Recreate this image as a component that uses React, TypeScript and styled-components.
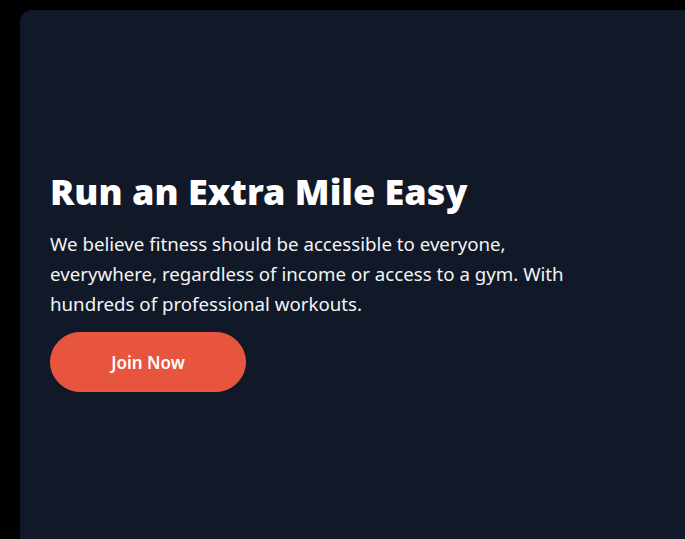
import React from 'react'
import styled, { createGlobalStyle } from 'styled-components'

const GlobalStyle = createGlobalStyle`
  html, body {
    margin: 0;
    padding: 0;
    background: #000;
    overflow: hidden;
  }
  * {
    box-sizing: border-box;
  }
`

const Page = styled.div`
  padding: 10px 0 0 20px;
  width: 100vw;
  height: 100vh;
  overflow: hidden;
`

const Hero = styled.section`
  width: 720px;
  height: 542px;
  background: #111827;
  border-radius: 12px;
  display: flex;
  flex-direction: column;
  justify-content: center;
  padding: 0 30px;
  font-family: 'Noto Sans', 'Open Sans', sans-serif;
`

const Title = styled.h1`
  margin: 0 0 15px;
  color: #fff;
  font-size: 36px;
  line-height: 44px;
  font-weight: 900;
`

const Lead = styled.p`
  margin: 0 0 13px;
  max-width: 540px;
  color: #f3f4f6;
  font-size: 18.7px;
  line-height: 30px;
`

const JoinButton = styled.button`
  width: 196px;
  height: 60px;
  border-radius: 30px;
  border: 1px solid #f0564a;
  background: #e8553f;
  color: #fff;
  font-family: inherit;
  font-size: 17px;
  font-weight: 600;
  cursor: pointer;
`

export default function App() {
  return (
    <>
      <GlobalStyle />
      <Page>
        <Hero>
          <Title>Run an Extra Mile Easy</Title>
          <Lead>
            We believe fitness should be accessible to everyone, everywhere, regardless of income
            or access to a gym. With hundreds of professional workouts.
          </Lead>
          <JoinButton>Join Now</JoinButton>
        </Hero>
      </Page>
    </>
  )
}
